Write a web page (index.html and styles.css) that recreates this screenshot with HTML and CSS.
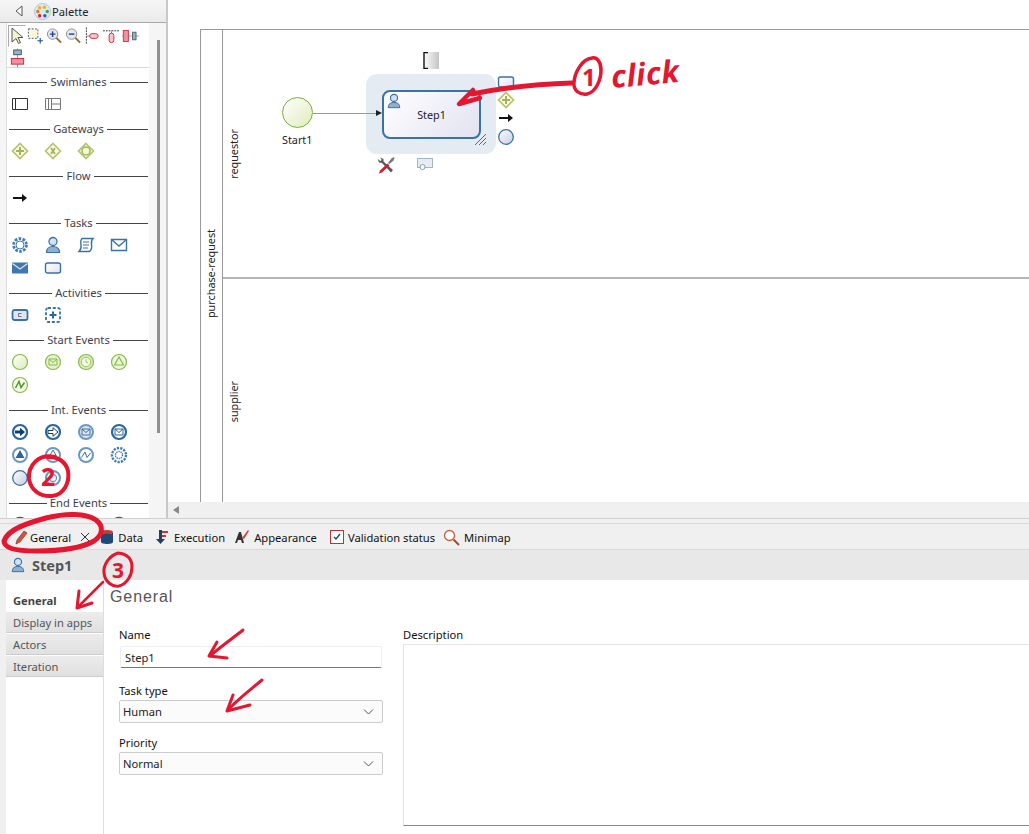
FILE: index.html
```html
<!DOCTYPE html>
<html lang="en">
  <head>
    <meta charset="UTF-8" />
    <title>Step1 - General</title>
    <link rel="stylesheet" href="styles.css">
  </head>
  <body>
    <svg class="defs">
      <defs>
        <linearGradient id="gBlue" x1="0" y1="0" x2="1" y2="1"><stop offset="0" stop-color="#fff"/><stop offset="1" stop-color="#c4cbe4"/></linearGradient>
        <linearGradient id="gGreen" x1="0" y1="0" x2="1" y2="1"><stop offset="0" stop-color="#fff"/><stop offset="1" stop-color="#dfeab8"/></linearGradient>
        <linearGradient id="gTask" x1="0" y1="0" x2="1" y2="1"><stop offset="0" stop-color="#fff"/><stop offset="1" stop-color="#e2e2f2"/></linearGradient>
        <symbol id="lane" viewBox="0 0 18 18"><path d="M1.5 3.5h15v11h-15zM4.5 3.5v11" fill="none" stroke="#333"/></symbol>
        <symbol id="lanes" viewBox="0 0 18 18"><path d="M1.5 3.5h15v11h-15zM4.5 3.5v11M7.5 3.5v11M7.5 9h9" fill="none" stroke="#777"/></symbol>
        <symbol id="gw-plus" viewBox="0 0 18 18"><path d="M9 1.5 16.5 9 9 16.5 1.5 9z" fill="#fbfbe8" stroke="#b5c26a" stroke-width="1.6"/><path d="M9 5v8M5 9h8" stroke="#a5b455" stroke-width="2"/></symbol>
        <symbol id="gw-x" viewBox="0 0 18 18"><path d="M9 1.5 16.5 9 9 16.5 1.5 9z" fill="#fbfbe8" stroke="#b5c26a" stroke-width="1.6"/><path d="M7 6l4 6M11 6l-4 6" stroke="#a5b455" stroke-width="1.8"/></symbol>
        <symbol id="gw-o" viewBox="0 0 18 18"><path d="M9 1.5 16.5 9 9 16.5 1.5 9z" fill="#f4f6d8" stroke="#b5c26a" stroke-width="1.6"/><circle cx="9" cy="9" r="4" fill="#f4f6d8" stroke="#a5b455" stroke-width="1.5"/></symbol>
        <symbol id="arrow" viewBox="0 0 18 18"><path d="M2 9h10" stroke="#111" stroke-width="2"/><path d="M11 5l5 4-5 4z" fill="#111"/></symbol>
        <symbol id="gear" viewBox="0 0 18 18"><circle cx="9" cy="9" r="6.400" fill="none" stroke="#3f7bb0" stroke-width="2.800" stroke-dasharray="2.600 1.400"/><circle cx="9" cy="9" r="4" fill="#fff" stroke="#3f7bb0"/></symbol>
        <symbol id="person" viewBox="0 0 18 18"><circle cx="9" cy="5.5" r="4" fill="#d5e0f2" stroke="#3a72a5" stroke-width="1.3"/><path d="M2.5 16.5c0-4 2.500-6 6.500-6s6.500 2 6.500 6z" fill="#8fb0cf" stroke="#3a72a5" stroke-width="1.100"/></symbol>
        <symbol id="script" viewBox="0 0 18 18"><path d="M5 2.500h11c-2 2-2 3-1.500 6s0 5.500-2 7H2c2-2 2.500-3.500 2-6.500S3.500 4 5 2.500z" fill="#fff" stroke="#3a72a5" stroke-width="1.400"/><path d="M6 6h6M6 9h6M6 12h5" stroke="#3a72a5"/></symbol>
        <symbol id="mail" viewBox="0 0 18 18"><path d="M1.500 3.500h15v11h-15z" fill="#fff" stroke="#3a72a5" stroke-width="1.400"/><path d="M1.500 3.500 9 10l7.500-6.500" fill="none" stroke="#3a72a5" stroke-width="1.400"/></symbol>
        <symbol id="mail-f" viewBox="0 0 18 18"><path d="M1 3.500h16v11H1z" fill="#3f78ad"/><path d="M1.500 4.500 9 10l7.500-5.500" fill="none" stroke="#dbe6f2" stroke-width="1.200"/></symbol>
        <symbol id="task" viewBox="0 0 18 18"><rect x="1.500" y="4" width="15" height="10" rx="2" fill="url(#gTask)" stroke="#3a72a5" stroke-width="1.400"/></symbol>
        <symbol id="call" viewBox="0 0 18 18"><rect x="1.500" y="4" width="15" height="10" rx="2" fill="#dfe6f0" stroke="#3a72a5" stroke-width="1.800"/><path d="M10.500 7.500h-3v3h3" fill="none" stroke="#667" stroke-width=".9"/></symbol>
        <symbol id="sub" viewBox="0 0 18 18"><rect x="2" y="2" width="14" height="14" rx="2" fill="#fff" stroke="#3a72a5" stroke-width="1.800" stroke-dasharray="3 1.800"/><path d="M9 5.500v7M5.500 9h7" stroke="#2f659b" stroke-width="2"/></symbol>
        <symbol id="st" viewBox="0 0 18 18"><circle cx="9" cy="9" r="7.500" fill="url(#gGreen)" stroke="#84bb4a" stroke-width="1.200"/></symbol>
        <symbol id="st-mail" viewBox="0 0 18 18"><circle cx="9" cy="9" r="7.500" fill="#e6f1cd" stroke="#84bb4a" stroke-width="1.200"/><path d="M5 6h8v6H5zM5 6l4 3.500L13 6" fill="none" stroke="#84bb4a"/></symbol>
        <symbol id="st-time" viewBox="0 0 18 18"><circle cx="9" cy="9" r="7.500" fill="#dcebb8" stroke="#84bb4a" stroke-width="1.200"/><circle cx="9" cy="9" r="4.700" fill="#f2f8e2" stroke="#84bb4a" stroke-width=".8"/><path d="M9 6v3l2 1" fill="none" stroke="#84bb4a" stroke-width=".8"/></symbol>
        <symbol id="st-tri" viewBox="0 0 18 18"><circle cx="9" cy="9" r="7.500" fill="#eef5d9" stroke="#84bb4a" stroke-width="1.200"/><path d="M9 4l4.500 8h-9z" fill="none" stroke="#84bb4a" stroke-width="1.200"/></symbol>
        <symbol id="st-sig" viewBox="0 0 18 18"><circle cx="9" cy="9" r="7.500" fill="#f6f9ea" stroke="#84bb4a" stroke-width="1.200"/><path d="M4.500 12 8 5.500l2 6 3.500-5" fill="none" stroke="#4d9a2a" stroke-width="1.500"/></symbol>
        <symbol id="in-arrow" viewBox="0 0 18 18"><circle cx="9" cy="9" r="7" fill="#fff" stroke="#2a659b" stroke-width="2.200"/><path d="M4 7.500h5V4.700L14 9l-5 4.300v-2.800H4z" fill="#123e6b"/></symbol>
        <symbol id="in-arrow2" viewBox="0 0 18 18"><circle cx="9" cy="9" r="7" fill="#fff" stroke="#2a659b" stroke-width="2.200"/><path d="M4 7.500h5V4.700L14 9l-5 4.300v-2.800H4z" fill="#fff" stroke="#123e6b"/></symbol>
        <symbol id="in-mail" viewBox="0 0 18 18"><circle cx="9" cy="9" r="7" fill="#dfe6f2" stroke="#6c97c0" stroke-width="2"/><path d="M5 6h8v6H5zM5 6l4 3.500L13 6" fill="none" stroke="#3a72a5"/></symbol>
        <symbol id="in-mail2" viewBox="0 0 18 18"><circle cx="9" cy="9" r="7" fill="#fff" stroke="#2a659b" stroke-width="2.200"/><path d="M5 6h8v6H5zM5 6l4 3.500L13 6" fill="none" stroke="#2a659b"/></symbol>
        <symbol id="in-tri" viewBox="0 0 18 18"><circle cx="9" cy="9" r="7" fill="#fff" stroke="#6c97c0" stroke-width="2"/><path d="M9 4l4.500 8h-9z" fill="#2a659b"/></symbol>
        <symbol id="in-tri2" viewBox="0 0 18 18"><circle cx="9" cy="9" r="7" fill="#fff" stroke="#6c97c0" stroke-width="2"/><path d="M9 4l4.500 8h-9z" fill="none" stroke="#3a72a5"/></symbol>
        <symbol id="in-sig" viewBox="0 0 18 18"><circle cx="9" cy="9" r="7" fill="#fff" stroke="#6c97c0" stroke-width="2"/><path d="M4.500 11.500 8 6l2 5.500L13.500 7" fill="none" stroke="#3a72a5"/></symbol>
        <symbol id="in-gear" viewBox="0 0 18 18"><circle cx="9" cy="9" r="7" fill="#fff" stroke="#3f7bb0" stroke-width="2.400" stroke-dasharray="2.200 1.200"/><circle cx="9" cy="9" r="3.500" fill="#fff" stroke="#3f7bb0" stroke-width="1.400" stroke-dasharray="1.400 .8"/></symbol>
        <symbol id="in-plain" viewBox="0 0 18 18"><circle cx="9" cy="9" r="7.300" fill="url(#gBlue)" stroke="#3a72a5" stroke-width="1.300"/></symbol>
        <symbol id="in-target" viewBox="0 0 18 18"><circle cx="9" cy="9" r="7" fill="#fff" stroke="#6c97c0" stroke-width="2"/><circle cx="9" cy="9" r="3.500" fill="none" stroke="#6c97c0" stroke-width="1.300"/></symbol>
        <symbol id="end" viewBox="0 0 18 18"><circle cx="9" cy="9" r="7.300" fill="#fff" stroke="#b02a3a" stroke-width="1.800"/></symbol>
      </defs>
    </svg>

    <div class="app">
      <div class="top">
        <div class="palette">
          <div class="palette-head">
            <svg class="collapse" width="10" height="12" viewBox="0 0 10 12"><path d="M8 1 2 6l6 5z" fill="#fff" stroke="#555"/></svg>
            <svg class="palette-logo" width="17" height="17" viewBox="0 0 18 18">
              <circle cx="9" cy="9" r="8.500" fill="#dfe7f4" stroke="#b5c0d2"/>
              <circle cx="6" cy="5" r="1.800" fill="#e9b422"/><circle cx="11" cy="4.500" r="1.800" fill="#e9b422"/>
              <circle cx="4" cy="9" r="1.800" fill="#e8731c"/><circle cx="14" cy="9" r="1.800" fill="#3aa648"/>
              <circle cx="6" cy="13.500" r="1.800" fill="#d7262e"/><circle cx="11.500" cy="13.500" r="1.800" fill="#2a5bc0"/>
            </svg>
            <span>Palette</span>
          </div>
          <div class="palette-body">
            <div class="palette-list">
              <div class="tools">
                <span class="tool tool-on"><svg width="16" height="18" viewBox="0 0 16 18"><path d="M3 1v14l4-3.500 2.500 5 2-1-2.500-5h5z" fill="#f5f3d0" stroke="#555"/></svg></span>
                <span class="tool"><svg width="18" height="18" viewBox="0 0 18 18"><rect x="1.500" y="1.500" width="10" height="10" fill="#fff5d5" stroke="#3a5a90" stroke-dasharray="2 1.500"/><path d="M14 11v6M11 14h6" stroke="#26508a" stroke-width="1.200"/></svg></span>
                <span class="tool"><svg width="18" height="18" viewBox="0 0 18 18"><circle cx="7" cy="7" r="5.500" fill="#e3e8f3" stroke="#8a8a8a"/><path d="M7 4v6M4 7h6" stroke="#223f9a" stroke-width="1.500"/><path d="M11 11l5 5" stroke="#8a6a3a" stroke-width="2"/></svg></span>
                <span class="tool"><svg width="18" height="18" viewBox="0 0 18 18"><circle cx="7" cy="7" r="5.500" fill="#e3e8f3" stroke="#8a8a8a"/><path d="M4 7h6" stroke="#223f9a" stroke-width="1.500"/><path d="M11 11l5 5" stroke="#8a6a3a" stroke-width="2"/></svg></span>
                <span class="tool"><svg width="18" height="18" viewBox="0 0 18 18"><path d="M2.500 0v18" stroke="#333" stroke-dasharray="2 1"/><path d="M3 9h3" stroke="#888"/><rect x="6" y="6.500" width="9" height="5" rx="2.500" fill="#f7c6cc" stroke="#d0283c"/></svg></span>
                <span class="tool"><svg width="18" height="18" viewBox="0 0 18 18"><path d="M0 3.500h18" stroke="#333" stroke-dasharray="2 1"/><path d="M9 4v2" stroke="#888"/><rect x="6.500" y="6" width="5" height="10" rx="2.500" fill="#f7c6cc" stroke="#d0283c"/></svg></span>
                <span class="tool"><svg width="20" height="18" viewBox="0 0 20 18"><path d="M0 9h20" stroke="#999"/><rect x="1.500" y="2.500" width="6" height="13" fill="#f28fa0" stroke="#d0283c"/><rect x="12.500" y="4.500" width="4" height="9" fill="#9bb4ba" stroke="#3d5560"/></svg></span>
                <span class="tool"><svg width="18" height="20" viewBox="0 0 18 20"><path d="M9 0v20" stroke="#999"/><rect x="5" y="1.500" width="8" height="5" fill="#9bb4ba" stroke="#3d5560"/><rect x="2.500" y="10.500" width="13" height="6" fill="#f28fa0" stroke="#d0283c"/></svg></span>
              </div>

              <div class="sec-title">Swimlanes</div>
              <div class="icon-grid">
                <svg class="ico"><use href="#lane"/></svg>
                <svg class="ico"><use href="#lanes"/></svg>
              </div>
              <div class="sec-title">Gateways</div>
              <div class="icon-grid">
                <svg class="ico"><use href="#gw-plus"/></svg>
                <svg class="ico"><use href="#gw-x"/></svg>
                <svg class="ico"><use href="#gw-o"/></svg>
              </div>
              <div class="sec-title">Flow</div>
              <div class="icon-grid">
                <svg class="ico"><use href="#arrow"/></svg>
              </div>
              <div class="sec-title">Tasks</div>
              <div class="icon-grid">
                <svg class="ico"><use href="#gear"/></svg>
                <svg class="ico"><use href="#person"/></svg>
                <svg class="ico"><use href="#script"/></svg>
                <svg class="ico"><use href="#mail"/></svg>
                <svg class="ico"><use href="#mail-f"/></svg>
                <svg class="ico"><use href="#task"/></svg>
              </div>
              <div class="sec-title">Activities</div>
              <div class="icon-grid">
                <svg class="ico"><use href="#call"/></svg>
                <svg class="ico"><use href="#sub"/></svg>
              </div>
              <div class="sec-title">Start Events</div>
              <div class="icon-grid">
                <svg class="ico"><use href="#st"/></svg>
                <svg class="ico"><use href="#st-mail"/></svg>
                <svg class="ico"><use href="#st-time"/></svg>
                <svg class="ico"><use href="#st-tri"/></svg>
                <svg class="ico"><use href="#st-sig"/></svg>
              </div>
              <div class="sec-title">Int. Events</div>
              <div class="icon-grid">
                <svg class="ico"><use href="#in-arrow"/></svg>
                <svg class="ico"><use href="#in-arrow2"/></svg>
                <svg class="ico"><use href="#in-mail"/></svg>
                <svg class="ico"><use href="#in-mail2"/></svg>
                <svg class="ico"><use href="#in-tri"/></svg>
                <svg class="ico"><use href="#in-tri2"/></svg>
                <svg class="ico"><use href="#in-sig"/></svg>
                <svg class="ico"><use href="#in-gear"/></svg>
                <svg class="ico"><use href="#in-plain"/></svg>
                <svg class="ico"><use href="#in-target"/></svg>
              </div>
              <div class="sec-title">End Events</div>
              <div class="icon-grid">
                <svg class="ico"><use href="#end"/></svg>
                <svg class="ico"><use href="#end"/></svg>
                <svg class="ico"><use href="#end"/></svg>
                <svg class="ico"><use href="#end"/></svg>
              </div>
            </div>
            <div class="palette-scroll"><div class="palette-thumb"></div></div>
          </div>
        </div>

        <div class="canvas">
          <div class="diagram">
            <div class="pool">
              <div class="pool-head"><span class="vtext">purchase-request</span></div>
              <div class="lanes">
                <div class="lane lane-a"><div class="lane-head"><span class="vtext">requestor</span></div></div>
                <div class="lane lane-b"><div class="lane-head"><span class="vtext">supplier</span></div></div>
              </div>
            </div>

            <!-- noeuds du diagramme, coordonnees relatives au canvas -->
            <div class="halo"></div>
            <div class="start-node"></div>
            <div class="node-label start-label">Start1</div>
            <div class="flow-line"></div>
            <div class="flow-head"></div>
            <div class="task-node">
              <svg class="task-person" width="16" height="18"><use href="#person"/></svg>
              <span>Step1</span>
            </div>
            <svg class="resize-mark" width="13" height="13" viewBox="0 0 13 13"><path d="M1 12 12 1M5 12l7-7M9 12l3-3" stroke="#666"/></svg>
            <svg class="lane-btn" width="16" height="17" viewBox="0 0 16 17">
              <defs><linearGradient id="gBtn"><stop offset="0" stop-color="#fff"/><stop offset="1" stop-color="#c4c4c4"/></linearGradient></defs>
              <rect width="16" height="17" fill="url(#gBtn)"/>
              <path d="M5 .5H1v16h4" fill="none" stroke="#111" stroke-width="1.400"/>
            </svg>
            <svg class="mini mini-task" width="18" height="18"><use href="#task"/></svg>
            <svg class="mini mini-gw" width="18" height="18"><use href="#gw-plus"/></svg>
            <svg class="mini mini-arrow" width="18" height="18"><use href="#arrow"/></svg>
            <svg class="mini mini-event" width="18" height="18"><use href="#in-plain"/></svg>
            <svg class="wrench" width="18" height="18" viewBox="0 0 18 18">
              <path d="M3 1.500 6.500 3v2.500L16 14l-2 2.500L5 7 2 6.500 .8 3 3.200 5 4.800 4z" fill="#5a5a5a"/>
              <path d="M11 7l3.500-4.500L17 1l.5 1-1 2.500L12.500 8z" fill="#777"/>
              <path d="M10.500 7.500 3 14.500l-1 3 3-1 7.500-7z" fill="#d0202c"/>
            </svg>
            <svg class="ctx-task" width="18" height="14" viewBox="0 0 18 14"><rect x="1.500" y="1.500" width="15" height="9" fill="#e6ecf3" stroke="#9fb6cc"/><circle cx="6.500" cy="10" r="2.500" fill="#fff" stroke="#7f9db9"/></svg>

            <div class="h-scroll"><span class="h-scroll-arrow"></span></div>
          </div>
        </div>
      </div>

      <div class="gap-bar"></div>

      <div class="tabbar">
        <span class="tab tab-on">
          <svg width="14" height="16" viewBox="0 0 14 16"><path d="M2 15l1-4 7-9 3 2-7 9z" fill="#d2553d" stroke="#7a3a2a" stroke-width=".7"/></svg>
          General
          <svg class="tab-close" width="10" height="10" viewBox="0 0 10 10"><path d="M1 1l8 8M9 1 1 9" stroke="#333"/></svg>
        </span>
        <span class="tab">
          <svg width="14" height="16" viewBox="0 0 14 16"><ellipse cx="7" cy="3" rx="6" ry="2" fill="#c33"/><path d="M1 3v10c0 2.600 12 2.600 12 0V3c0 2.600-12 2.600-12 0z" fill="#1f4a78"/></svg>
          Data
        </span>
        <span class="tab tab-exec">
          <svg width="16" height="16" viewBox="0 0 16 16"><path d="M5 1h3v9h3l-4.500 5L2 10h3z" fill="#1f3f66"/><path d="M8 2h6v2H8zM8 6h4v2H8z" fill="#c33"/></svg>
          Execution
        </span>
        <span class="tab tab-look">
          <svg width="16" height="16" viewBox="0 0 16 16"><path d="M1 14 5 3h2l3 11H8l-1-3H4l-1 3z" fill="#333"/><path d="M8 9l6-8 1 1-5 8z" fill="#c44"/></svg>
          Appearance
        </span>
        <span class="tab tab-check">
          <svg width="14" height="14" viewBox="0 0 14 14"><rect x=".5" y=".5" width="13" height="13" fill="#fff" stroke="#b33"/><path d="M4 7l2 2 4-5" fill="none" stroke="#1f4a78" stroke-width="1.400"/></svg>
          Validation status
        </span>
        <span class="tab">
          <svg width="17" height="17" viewBox="0 0 17 17"><circle cx="6.500" cy="6.500" r="5" fill="#fff" stroke="#c9603f" stroke-width="1.300"/><path d="M10.500 10.500l5.500 5.500" stroke="#a8452d" stroke-width="2"/></svg>
          Minimap
        </span>
      </div>

      <div class="titlebar">
        <svg width="16" height="18"><use href="#person"/></svg>
        <span>Step1</span>
      </div>

      <div class="props">
        <div class="side-tabs">
          <div class="side-tab side-on">General</div>
          <div class="side-tab">Display in apps</div>
          <div class="side-tab">Actors</div>
          <div class="side-tab">Iteration</div>
        </div>
        <div class="props-main">
          <h2 class="props-title">General</h2>
          <div class="form">
            <div class="form-left">
              <label class="lbl">Name</label>
              <div class="input">Step1</div>
              <label class="lbl lbl-type">Task type</label>
              <div class="select">Human <svg width="11" height="6" viewBox="0 0 11 6"><path d="M1 .5l4.500 4.500L10 .5" fill="none" stroke="#555"/></svg></div>
              <label class="lbl lbl-prio">Priority</label>
              <div class="select">Normal <svg width="11" height="6" viewBox="0 0 11 6"><path d="M1 .5l4.500 4.500L10 .5" fill="none" stroke="#555"/></svg></div>
            </div>
            <div class="form-right">
              <label class="lbl">Description</label>
              <div class="textarea"></div>
            </div>
          </div>
        </div>
      </div>

      <!-- annotations au feutre rouge par dessus la capture -->
      <svg class="marks" width="1029" height="834" viewBox="0 0 1029 834">
        <g fill="none" stroke="#e5162f" stroke-linecap="round" stroke-linejoin="round">
          <path d="M572 83c-30 1-65 4-100 11" stroke-width="5"/>
          <path d="M473 90 459 104l21-6" stroke-width="4.500"/>
          <path d="M592 58c-10 1-17 14-18 24-1 9 6 13 13 12 9-2 14-14 14-24 0-8-4-13-9-12z" stroke-width="3.500"/>
          <path d="M55 457C38 453 28 466 29 479c2 12 12 18 23 17 12-1 18-14 16-25-2-9-10-15-21-14" stroke-width="4"/>
          <path d="M4 541c4-12 24-18 42-23 20-5 40-5 50 2 8 6 7 15-2 21-14 8-38 10-58 10-16 0-32-2-32-10z" stroke-width="5"/>
          <path d="M118 553c-9 3-15 12-14 20 1 9 8 14 15 13 8-2 13-11 13-19 0-8-5-13-14-14" stroke-width="3"/>
          <path d="M103 582 78 607" stroke-width="2.500"/>
          <path d="M79 591 77 608 92 603" stroke-width="3"/>
          <path d="M243 630C233 638 220 647 210 656" stroke-width="3"/>
          <path d="M217 642 209 656 227 658" stroke-width="3"/>
          <path d="M262 680C250 690 238 699 228 710" stroke-width="3"/>
          <path d="M233 695 227 711 250 705" stroke-width="3"/>
        </g>
        <g class="marks-text">
          <text class="mark-num" x="582" y="86" font-size="24">1</text>
          <text class="mark-num" x="41" y="486" font-size="25">2</text>
          <text class="mark-num" x="112" y="578" font-size="21">3</text>
          <text class="mark-click" x="612" y="88" font-size="31" transform="rotate(-5 612 88)">click</text>
        </g>
      </svg>
    </div>
  </body>
</html>
```

FILE: styles.css
```css
* {
  box-sizing: border-box;
}
html,
body {
  margin: 0;
  padding: 0;
  background: #fff;
}
body {
  font-family: "Noto Sans", "Open Sans", sans-serif;
  font-size: 11.200px;
  color: #222;
}
.defs {
  position: absolute;
  width: 0;
  height: 0;
}
.app {
  position: relative;
  width: 1029px;
  height: 834px;
  overflow: hidden;
  display: flex;
  flex-direction: column;
}

/* palette */
.top {
  display: flex;
  height: 519px;
  flex: none;
  border-bottom: 1px solid #d0d0d0;
}
.palette {
  width: 168px;
  flex: none;
  display: flex;
  flex-direction: column;
  border-right: 2px solid #c8c8c8;
  background: #f5f5f5;
  overflow: hidden;
}
.palette-head {
  height: 23px;
  flex: none;
  display: flex;
  align-items: center;
  padding-left: 14px;
  background: linear-gradient(#f6f6f6, #eaeaea);
  border-bottom: 1px solid #a8a8a8;
}
.palette-logo {
  margin-left: 10px;
  margin-right: 1px;
}
.palette-body {
  flex: 1;
  display: flex;
  min-height: 0;
}
.palette-list {
  width: 143px;
  margin-left: 6px;
  flex: none;
  background: #fff;
  overflow: hidden;
  border-left: 1px solid #ddd;
}
.palette-scroll {
  flex: 1;
  padding: 17px 0 0 8px;
}
.palette-thumb {
  width: 3px;
  height: 393px;
  background: #8e8e8e;
}
.tools {
  display: flex;
  flex-wrap: wrap;
  align-items: center;
  height: 45px;
  padding: 2px 0 0 1px;
  border-bottom: 1px solid #d8d8d8;
  margin-bottom: 5px;
  align-content: flex-start;
}
.tool {
  width: 19px;
  height: 22px;
  display: flex;
  align-items: center;
  justify-content: center;
  border: 1px solid transparent;
}
.tool-on {
  width: 18px;
  border-color: #aaa #fff #fff #aaa;
}
.sec-title {
  display: flex;
  align-items: center;
  gap: 3px;
  height: 18px;
  color: #3e3e50;
  margin: 0 1px 0 2px;
  line-height: 18px;
}
.sec-title::before,
.sec-title::after {
  content: "";
  flex: 1;
  height: 1px;
  background: #444;
}
.icon-grid {
  display: grid;
  grid-template-columns: repeat(4, 33px);
  grid-auto-rows: 23px;
  align-items: center;
  padding: 1px 0 0 4px;
  margin-bottom: 5px;
}
.ico {
  width: 18px;
  height: 18px;
  display: block;
}

/* diagramme */
.canvas {
  flex: 1;
  min-width: 0;
  background: #fff;
}
.diagram {
  position: relative;
  width: 100%;
  height: 100%;
  overflow: hidden;
  font-size: 10.800px;
}
.pool {
  position: absolute;
  left: 32px;
  top: 29px;
  right: 0;
  bottom: 16px;
  display: flex;
  border-top: 1px solid #999;
  border-left: 1px solid #999;
}
.pool-head {
  width: 22px;
  flex: none;
  display: flex;
  align-items: center;
  justify-content: center;
  border-right: 1px solid #999;
  padding-top: 16px;
}
.lanes {
  flex: 1;
  display: flex;
  flex-direction: column;
}
.lane {
  flex: none;
  display: flex;
}
.lane-a {
  height: 249px;
  border-bottom: 2px solid #b4b4b4;
}
.lane-b {
  flex: 1;
}
.lane-head {
  width: 22px;
  display: flex;
  align-items: center;
  justify-content: center;
}
.lane-b .lane-head {
  padding-top: 22px;
}
.vtext {
  writing-mode: vertical-rl;
  transform: rotate(180deg);
  white-space: nowrap;
  line-height: 1;
}
.halo {
  position: absolute;
  left: 198px;
  top: 74px;
  width: 130px;
  height: 80px;
  border-radius: 11px;
  background: #e4ebf3;
}
.start-node {
  position: absolute;
  left: 114px;
  top: 97px;
  width: 31px;
  height: 31px;
  border-radius: 50%;
  border: 1.500px solid #78b03a;
  background: linear-gradient(135deg, #fff, #e1ebbc);
}
.node-label {
  position: absolute;
  line-height: 14px;
}
.start-label {
  left: 114px;
  top: 133px;
}
.flow-line {
  position: absolute;
  left: 145px;
  top: 113px;
  width: 68px;
  height: 1px;
  background: #999;
}
.flow-head {
  position: absolute;
  left: 208px;
  top: 110px;
  border-left: 6px solid #222;
  border-top: 3.500px solid transparent;
  border-bottom: 3.500px solid transparent;
}
.task-node {
  position: absolute;
  left: 214px;
  top: 90px;
  width: 99px;
  height: 49px;
  border: 2px solid #3a72a5;
  border-radius: 8px;
  background: linear-gradient(135deg, #fff, #e2e2f2);
  display: flex;
  align-items: center;
  justify-content: center;
}
.task-person {
  position: absolute;
  left: 2px;
  top: 0;
}
.resize-mark {
  position: absolute;
  left: 306px;
  top: 133px;
}
.lane-btn {
  position: absolute;
  left: 255px;
  top: 52px;
}
.mini {
  position: absolute;
  left: 329px;
}
.mini-task { top: 73px; }
.mini-gw { top: 91px; }
.mini-arrow { top: 109px; }
.mini-event { top: 128px; }
.wrench {
  position: absolute;
  left: 209px;
  top: 156px;
}
.ctx-task {
  position: absolute;
  left: 248px;
  top: 157px;
}
.h-scroll {
  position: absolute;
  left: 0;
  right: 0;
  bottom: 0;
  height: 16px;
  background: #f0f0f0;
  padding: 4px 0 0 5px;
}
.h-scroll-arrow {
  display: block;
  width: 0;
  border-right: 6px solid #888;
  border-top: 4px solid transparent;
  border-bottom: 4px solid transparent;
}

/* vues du bas */
.gap-bar {
  height: 4px;
  flex: none;
  background: #f0f0f0;
}
.tabbar {
  height: 27px;
  flex: none;
  display: flex;
  align-items: center;
  padding: 1px 0 0 14px;
  background: #f0f0f0;
  border-top: 1px solid #d8d8d8;
  border-bottom: 1px solid #d8d8d8;
  color: #111;
}
.tab {
  display: flex;
  align-items: center;
  gap: 4px;
  white-space: nowrap;
  margin-right: 11px;
}
.tab-on {
  gap: 2px;
  margin-right: 10px;
}
.tab-exec {
  margin-right: 9px;
}
.tab-look {
  margin-right: 13px;
}
.tab-check {
  margin-right: 8px;
}
.tab-close {
  margin-left: 7px;
}
.titlebar {
  height: 30px;
  flex: none;
  display: flex;
  align-items: center;
  gap: 6px;
  padding-left: 10px;
  background: #e8e8e8;
  font-weight: 700;
  font-size: 14.500px;
  color: #555;
}
.props {
  flex: 1;
  display: flex;
  min-height: 0;
  border-left: 6px solid #f0f0f0;
}
.side-tabs {
  width: 98px;
  flex: none;
  padding-top: 10px;
  border-right: 1px solid #ddd;
  color: #555;
}
.side-tab {
  height: 21px;
  margin-bottom: 1px;
  padding-left: 7px;
  line-height: 21px;
  background: linear-gradient(#ececec, #e0e0e0);
  border-bottom: 1px solid #ccc;
}
.side-on {
  background: #fff;
  font-weight: 700;
  color: #444;
  border-bottom: none;
}
.props-main {
  flex: 1;
  min-width: 0;
  padding: 7px 0 0 6px;
}
.props-title {
  margin: 0;
  height: 20px;
  line-height: 20px;
  font-family: "Liberation Sans", Arial, sans-serif;
  font-weight: 400;
  font-size: 16px;
  letter-spacing: .9px;
  color: #555;
}
.form {
  display: flex;
  gap: 20px;
  padding: 20px 0 0 9px;
}
.form-left {
  width: 264px;
  flex: none;
}
.form-right {
  flex: 1;
  min-width: 0;
}
.lbl {
  display: block;
  height: 16px;
  line-height: 16px;
  color: #111;
}
.lbl-type {
  margin-top: 15px;
}
.lbl-prio {
  margin-top: 12px;
}
.input {
  height: 22px;
  margin: 3px 1px 0;
  padding-left: 4px;
  line-height: 21px;
  border: 1px solid #eee;
  border-bottom: 1px solid #777;
  border-radius: 2px;
}
.select {
  height: 23px;
  margin-top: 1px;
  padding: 0 8px 0 3px;
  display: flex;
  align-items: center;
  justify-content: space-between;
  background: #fbfbfb;
  border: 1px solid #ccc;
  border-radius: 2px;
}
.textarea {
  height: 182px;
  margin-top: 1px;
  border: 1px solid #e4e4e4;
  border-bottom: 1px solid #888;
  border-right: none;
}

/* annotations */
.marks {
  position: absolute;
  left: 0;
  top: 0;
  pointer-events: none;
}
.marks-text {
  font-family: "Open Sans", sans-serif;
  font-weight: 700;
  fill: #e5162f;
}
.mark-click {
  font-style: italic;
  letter-spacing: .5px;
}
```
